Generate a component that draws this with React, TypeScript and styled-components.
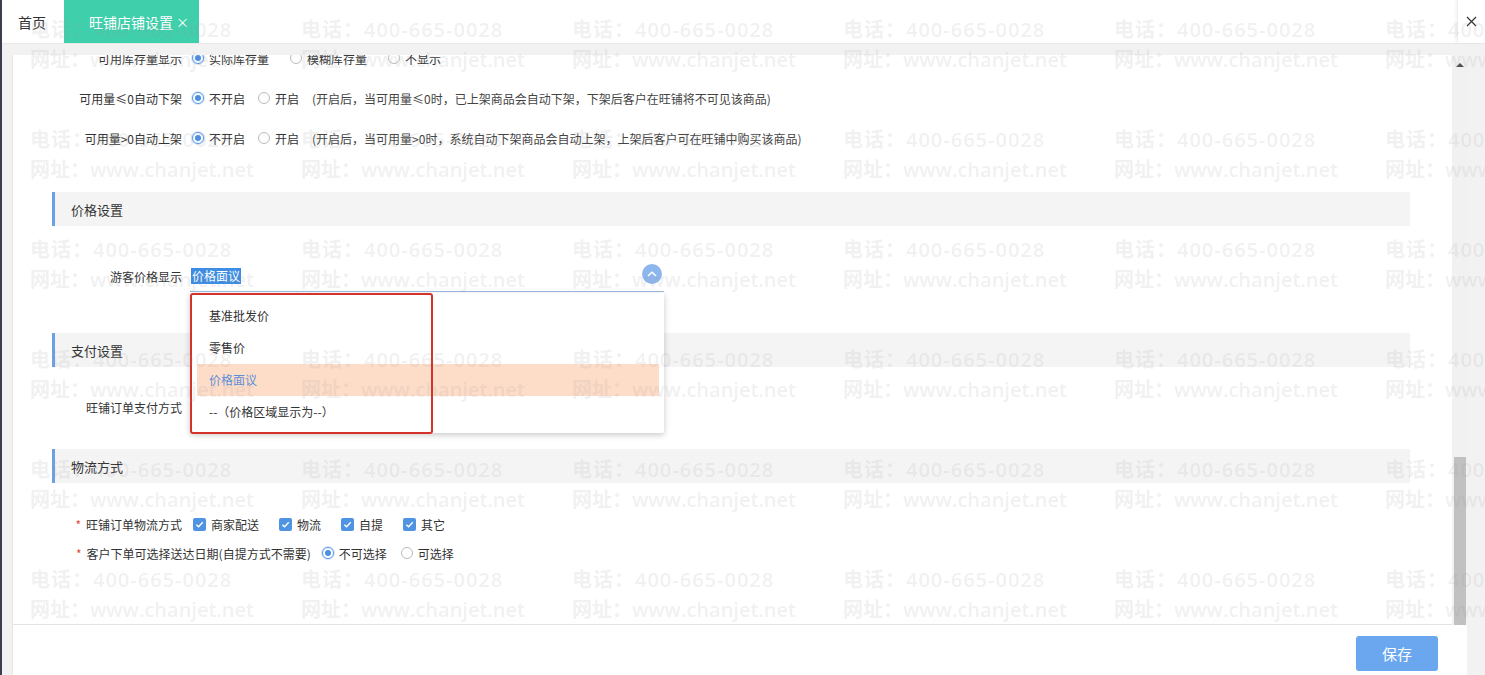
import React from 'react'
import styled, { createGlobalStyle } from 'styled-components'

const GlobalStyle = createGlobalStyle`
  html, body {
    margin: 0;
    padding: 0;
  }
  body {
    font-family: 'Noto Sans CJK SC', 'Noto Sans', sans-serif;
    font-size: 12px;
    color: #333;
    background: #f2f2f3;
    overflow: hidden;
  }
  * {
    box-sizing: border-box;
  }
`

const watermarkTiles = Array.from({ length: 36 }, (_, i) => i)

const priceOptions = ['基准批发价', '零售价', '价格面议', '--（价格区域显示为--）']

const shippingOptions = ['商家配送', '物流', '自提', '其它']

function Radio({ checked, label, gap = 13 }) {
  return (
    <RadioOption $gap={gap}>
      <RadioDot $checked={checked} />
      <span>{label}</span>
    </RadioOption>
  )
}

function Check({ label }) {
  return (
    <CheckOption>
      <CheckBox>
        <svg width="9" height="9" viewBox="0 0 10 10">
          <path d="M1.5 5.2 L4 7.6 L8.6 2.6" fill="none" stroke="#fff" strokeWidth="1.6" />
        </svg>
      </CheckBox>
      <span>{label}</span>
    </CheckOption>
  )
}

export default function App() {
  return (
    <Page>
      <GlobalStyle />
      <DarkEdge />
      <Main>
        <TabBar>
          <Tab>首页</Tab>
          <Tab $active>
            旺铺店铺设置
            <TabClose>×</TabClose>
          </Tab>
          <CloseBox>
            <svg width="11" height="11" viewBox="0 0 11 11">
              <path d="M1 1 L10 10 M10 1 L1 10" stroke="#333" strokeWidth="1.2" />
            </svg>
          </CloseBox>
        </TabBar>

        <Body>
          <PanelColumn>
            <ScrollArea>
              <Content>
                <Inner>
                  <Row $h={40}>
                    <Label>可用库存量显示</Label>
                    <Radio checked label="实际库存量" gap={21} />
                    <Radio label="模糊库存量" gap={21} />
                    <Radio label="不显示" />
                  </Row>
                  <Row $h={40}>
                    <Label>可用量≤0自动下架</Label>
                    <Radio checked label="不开启" />
                    <Radio label="开启" />
                    <Hint>(开启后，当可用量≤0时，已上架商品会自动下架，下架后客户在旺铺将不可见该商品)</Hint>
                  </Row>
                  <Row $h={40}>
                    <Label>可用量&gt;0自动上架</Label>
                    <Radio checked label="不开启" />
                    <Radio label="开启" />
                    <Hint>(开启后，当可用量&gt;0时，系统自动下架商品会自动上架，上架后客户可在旺铺中购买该商品)</Hint>
                  </Row>

                  <Section $mt={34}>价格设置</Section>
                  <Row $h={40} $mt={30}>
                    <Label $gap={8}>游客价格显示</Label>
                    <SelectBox>
                      <SelectValue>价格面议</SelectValue>
                      <ArrowBtn>
                        <svg width="10" height="6" viewBox="0 0 10 6">
                          <path d="M1 5 L5 1.2 L9 5" fill="none" stroke="#fff" strokeWidth="1.5" />
                        </svg>
                      </ArrowBtn>
                      <Dropdown>
                        {priceOptions.map(opt => (
                          <DropItem key={opt} $active={opt === '价格面议'}>
                            {opt}
                          </DropItem>
                        ))}
                        <RedFrame />
                      </Dropdown>
                    </SelectBox>
                  </Row>

                  <Section $mt={37}>支付设置</Section>
                  <Row $h={40} $mt={20}>
                    <Label>旺铺订单支付方式</Label>
                  </Row>

                  <Section $mt={22}>物流方式</Section>
                  <Row $h={30} $mt={26}>
                    <Label $gap={11}>
                      <Star>*</Star>旺铺订单物流方式
                    </Label>
                    {shippingOptions.map(opt => (
                      <Check key={opt} label={opt} />
                    ))}
                  </Row>
                  <Row $h={28}>
                    <Label $wide $gap={11}>
                      <Star>*</Star>客户下单可选择送达日期(自提方式不需要)
                    </Label>
                    <Radio checked label="不可选择" gap={14} />
                    <Radio label="可选择" />
                  </Row>
                </Inner>
              </Content>
              <ScrollTrack>
                <ScrollUp />
                <ScrollThumb />
              </ScrollTrack>
            </ScrollArea>
            <Footer>
              <SaveButton>保存</SaveButton>
            </Footer>
          </PanelColumn>
        </Body>
      </Main>

      {/* watermark lies over the whole page */}
      <Watermark>
        {watermarkTiles.map(i => (
          <div key={i}>
            <WmLine $ls={1}>电话：400-665-0028</WmLine>
            <WmLine $ls={0}>网址：www.chanjet.net</WmLine>
          </div>
        ))}
      </Watermark>
    </Page>
  )
}

const Page = styled.div`
  display: flex;
  width: 1485px;
  height: 675px;
  position: relative;
  overflow: hidden;
`

const DarkEdge = styled.div`
  width: 2px;
  flex-shrink: 0;
  background: #3a3e4f;
`

const Main = styled.div`
  flex: 1;
  display: flex;
  flex-direction: column;
  background: #f2f2f3;
`

const TabBar = styled.div`
  height: 44px;
  display: flex;
  align-items: stretch;
  background: #fff;
  border-bottom: 1px solid #e9e9e9;
  flex-shrink: 0;
`

const Tab = styled.div`
  display: flex;
  align-items: center;
  font-size: 14px;
  padding: ${p => (p.$active ? '0 10px 0 25px' : '0 18px 0 16px')};
  background: ${p => (p.$active ? '#40cfab' : 'transparent')};
  color: ${p => (p.$active ? '#fff' : '#333')};
`

const TabClose = styled.span`
  margin-left: 3px;
  font-size: 13px;
`

const CloseBox = styled.div`
  margin-left: auto;
  width: 28px;
  display: flex;
  align-items: center;
  justify-content: center;
  border-left: 1px solid #ededed;
  box-shadow: -2px 0 3px rgba(0, 0, 0, 0.04);
`

const Body = styled.div`
  flex: 1;
  display: flex;
  padding: 11px 18px 0 10px;
`

const PanelColumn = styled.div`
  flex: 1;
  display: flex;
  flex-direction: column;
  background: #fff;
  border-left: 1px solid #e6e6e6;
`

const ScrollArea = styled.div`
  height: 570px;
  display: flex;
  flex-shrink: 0;
`

const Content = styled.div`
  flex: 1;
  overflow: hidden;
  border-bottom: 1px solid #e3e3e3;
`

const Inner = styled.div`
  margin-top: -17px;
  display: flex;
  flex-direction: column;
`

const Row = styled.div`
  height: ${p => p.$h}px;
  margin-top: ${p => p.$mt || 0}px;
  display: flex;
  align-items: center;
  flex-shrink: 0;
`

const Label = styled.div`
  width: ${p => (p.$wide ? 'auto' : '169px')};
  padding-left: ${p => (p.$wide ? '63px' : '0')};
  margin-right: ${p => (p.$gap !== undefined ? p.$gap : 10)}px;
  text-align: right;
  flex-shrink: 0;
  color: #333;
  white-space: nowrap;
`

const Star = styled.span`
  color: #e5473a;
  margin-right: 5px;
`

const RadioOption = styled.label`
  display: inline-flex;
  align-items: center;
  margin-right: ${p => p.$gap}px;
  color: #333;
  white-space: nowrap;
`

const RadioDot = styled.span`
  width: 12px;
  height: 12px;
  border-radius: 50%;
  margin-right: 5px;
  flex-shrink: 0;
  background: #fff;
  border: 1px solid ${p => (p.$checked ? '#5a9ae6' : '#b9b9b9')};
  box-shadow: ${p => (p.$checked ? '0 0 0 1px rgba(90, 154, 230, 0.25)' : 'none')};
  display: flex;
  align-items: center;
  justify-content: center;
  &::after {
    content: '';
    width: 6px;
    height: 6px;
    border-radius: 50%;
    background: ${p => (p.$checked ? '#4a8fe2' : 'transparent')};
  }
`

const Hint = styled.span`
  color: #444;
  white-space: nowrap;
`

const CheckOption = styled.label`
  display: inline-flex;
  align-items: center;
  margin-right: 20px;
  white-space: nowrap;
`

const CheckBox = styled.span`
  width: 13px;
  height: 13px;
  border-radius: 2px;
  background: #4f93e3;
  margin-right: 5px;
  display: flex;
  align-items: center;
  justify-content: center;
`

const Section = styled.div`
  height: 34px;
  flex-shrink: 0;
  margin: ${p => p.$mt}px 42px 0 39px;
  background: #f4f4f4;
  border-left: 3px solid #6ca0e4;
  padding-left: 16px;
  display: flex;
  align-items: center;
  font-size: 13px;
  color: #333;
`

const SelectBox = styled.div`
  position: relative;
  width: 474px;
  height: 31px;
  display: flex;
  justify-content: space-between;
  align-items: center;
  padding: 0 2px 0 1px;
  border-bottom: 1px solid #9dbde6;
`

const SelectValue = styled.span`
  background: #3d8de2;
  color: #fff;
  line-height: 16px;
  padding: 0 1px;
`

const ArrowBtn = styled.span`
  width: 20px;
  height: 20px;
  border-radius: 50%;
  background: #8db7ec;
  align-self: flex-start;
  margin-top: 3px;
  display: flex;
  align-items: center;
  justify-content: center;
`

const Dropdown = styled.div`
  position: absolute;
  left: 0;
  top: 32px;
  width: 474px;
  height: 140px;
  padding: 7px 5px 5px 7px;
  background: #fff;
  border-radius: 2px;
  box-shadow: 0 2px 6px rgba(0, 0, 0, 0.22);
  z-index: 5;
`

const DropItem = styled.div`
  height: 32px;
  display: flex;
  align-items: center;
  padding-left: 12px;
  color: ${p => (p.$active ? '#5d8fd8' : '#333')};
  background: ${p => (p.$active ? '#fddcc8' : 'transparent')};
`

const RedFrame = styled.div`
  position: absolute;
  left: 0;
  top: 0;
  width: 243px;
  height: 141px;
  border: 2px solid #d6322c;
  border-radius: 3px;
  pointer-events: none;
`

const ScrollTrack = styled.div`
  width: 15px;
  flex-shrink: 0;
  background: #f1f1f1;
  display: flex;
  flex-direction: column;
  align-items: center;
`

const ScrollUp = styled.div`
  margin-top: 8px;
  width: 0;
  height: 0;
  border-left: 4px solid transparent;
  border-right: 4px solid transparent;
  border-bottom: 4px solid #505050;
`

const ScrollThumb = styled.div`
  margin-top: auto;
  width: 12px;
  height: 168px;
  background: #c1c1c1;
`

const Footer = styled.div`
  flex: 1;
  display: flex;
  justify-content: flex-end;
  align-items: flex-start;
  padding: 11px 29px 0 0;
`

const SaveButton = styled.button`
  width: 82px;
  height: 35px;
  border: none;
  border-radius: 3px;
  background: #6aa7ef;
  color: #fff;
  font-family: 'Noto Sans CJK SC', sans-serif;
  font-size: 15px;
`

const Watermark = styled.div`
  position: absolute;
  inset: 0;
  pointer-events: none;
  z-index: 10;
  display: grid;
  grid-template-columns: repeat(6, 271px);
  grid-auto-rows: 110px;
  padding: 15px 0 0 30px;
  overflow: hidden;
`

const WmLine = styled.div`
  font-family: 'Open Sans', 'Noto Sans CJK SC', sans-serif;
  font-size: 20px;
  line-height: 30px;
  font-weight: 600;
  letter-spacing: ${p => p.$ls}px;
  color: rgba(150, 150, 150, 0.15);
  white-space: nowrap;
`
